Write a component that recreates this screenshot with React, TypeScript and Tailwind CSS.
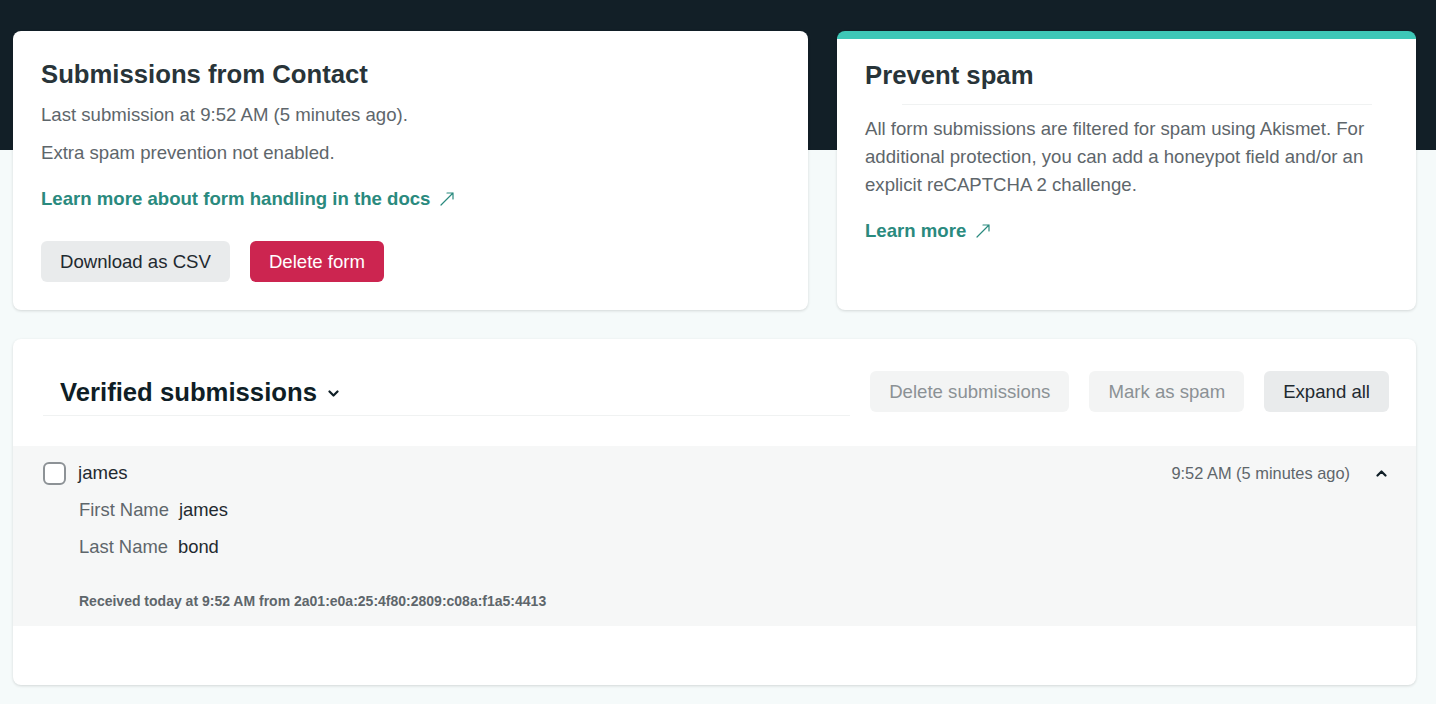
import React from 'react';

function ArrowOut() {
  return (
    <svg width="16" height="16" viewBox="0 0 16 16" fill="none" className="ml-[9px] inline-block">
      <path d="M2 14 L14 2 M8 2 H14 V8" stroke="currentColor" strokeWidth="1.2" strokeLinecap="round" strokeLinejoin="round" />
    </svg>
  );
}

function Chevron({ up }: { up?: boolean }) {
  return (
    <svg width="11" height="7" viewBox="0 0 11 7" fill="none">
      <path
        d={up ? 'M1.5 5.5 L5.5 1.5 L9.5 5.5' : 'M1.5 1.5 L5.5 5.5 L9.5 1.5'}
        stroke="currentColor"
        strokeWidth="2.2"
        strokeLinecap="round"
        strokeLinejoin="round"
      />
    </svg>
  );
}

const fields = [
  { label: 'First Name', value: 'james' },
  { label: 'Last Name', value: 'bond' },
];

export default function App() {
  return (
    <div className="min-h-screen bg-[linear-gradient(#121f27_150px,#f5fafa_150px)] pl-[13px] pr-[20px] pt-[31px] pb-[19px] font-['Liberation_Sans',Arial,sans-serif]">
      <div className="grid grid-cols-[795px_579px] gap-[29px]">
        {/* form summary */}
        <div className="rounded-lg bg-white px-[28px] pt-[27px] pb-[28px] shadow-[0_1px_3px_rgba(0,0,0,0.14)]">
          <h2 className="text-[25.7px] leading-[32px] font-bold text-[#283439]">Submissions from Contact</h2>
          <p className="mt-[11px] text-[18.6px] leading-[28px] text-[#5e666b]">Last submission at 9:52 AM (5 minutes ago).</p>
          <p className="mt-[10px] text-[18.6px] leading-[28px] text-[#5e666b]">Extra spam prevention not enabled.</p>
          <a className="mt-[18px] flex items-center text-[18.6px] leading-[28px] font-bold text-[#2a8a7e]">
            Learn more about form handling in the docs
            <ArrowOut />
          </a>
          <div className="mt-[28px] flex gap-[20px]">
            <button className="h-[41px] rounded-md bg-[#e9ebec] px-[19px] text-[18.6px] text-[#1f2a30]">Download as CSV</button>
            <button className="h-[41px] rounded-md bg-[#cc2550] px-[19px] text-[18.6px] text-white">Delete form</button>
          </div>
        </div>

        {/* spam */}
        <div className="rounded-lg border-t-[8px] border-[#3ec7b7] bg-white px-[28px] pt-[20px] pb-[28px] shadow-[0_1px_3px_rgba(0,0,0,0.14)]">
          <h2 className="text-[25.7px] leading-[32px] font-bold text-[#283439]">Prevent spam</h2>
          <div className="mt-[13px] ml-[37px] mr-[16px] h-px bg-[#f0f2f2]" />
          <p className="mt-[10px] text-[18.6px] leading-[28px] text-[#5e666b]">
            All form submissions are filtered for spam using Akismet. For additional protection, you can add a honeypot field and/or an explicit reCAPTCHA 2 challenge.
          </p>
          <a className="mt-[18px] flex items-center text-[18.6px] leading-[28px] font-bold text-[#2a8a7e]">
            Learn more
            <ArrowOut />
          </a>
        </div>
      </div>

      {/* submissions list */}
      <div className="mt-[29px] rounded-lg bg-white pb-[59px] shadow-[0_1px_3px_rgba(0,0,0,0.14)]">
        <div className="flex pl-[30px] pr-[27px] pt-[32px]">
          <div className="flex h-[45px] flex-1 items-center border-b border-[#f0f2f2] pl-[17px] pb-[3px]">
            <h2 className="text-[25.7px] leading-[32px] font-bold text-[#0f1e26]">Verified submissions</h2>
            <span className="ml-[11px] mt-[3px] text-[#0f1e26]">
              <Chevron />
            </span>
          </div>
          <div className="ml-[20px] flex gap-[20px]">
            <button className="h-[41px] rounded-md bg-[#f3f4f4] px-[19px] text-[18.6px] text-[#8b9195]">Delete submissions</button>
            <button className="h-[41px] rounded-md bg-[#f3f4f4] px-[19px] text-[18.6px] text-[#8b9195]">Mark as spam</button>
            <button className="h-[41px] rounded-md bg-[#e9ebec] px-[19px] text-[18.6px] text-[#1f2a30]">Expand all</button>
          </div>
        </div>

        <div className="mt-[30px] bg-[#f6f7f7] pl-[30px] pr-[29px] pt-[13px] pb-[15px]">
          <div className="flex h-[28px] items-center">
            <span className="h-[23px] w-[23px] rounded-[6px] border-2 border-[#8d9296] bg-white" />
            <span className="ml-[12px] text-[18.6px] text-[#1f2a30]">james</span>
            <span className="ml-auto text-[16.4px] text-[#5e666b]">9:52 AM (5 minutes ago)</span>
            <span className="ml-[26px] text-[#0f1e26]">
              <Chevron up />
            </span>
          </div>
          <div className="mt-[9px] flex flex-col gap-[9px] pl-[36px]">
            {fields.map((f) => (
              <div key={f.label} className="flex gap-[10px] text-[18.4px] leading-[28px]">
                <span className="text-[#5e666b]">{f.label}</span>
                <span className="text-[#1f2a30]">{f.value}</span>
              </div>
            ))}
          </div>
          <p className="mt-[30px] pl-[36px] text-[14px] leading-[20px] font-bold text-[#5e666b]">
            Received today at 9:52 AM from 2a01:e0a:25:4f80:2809:c08a:f1a5:4413
          </p>
        </div>
      </div>
    </div>
  );
}
